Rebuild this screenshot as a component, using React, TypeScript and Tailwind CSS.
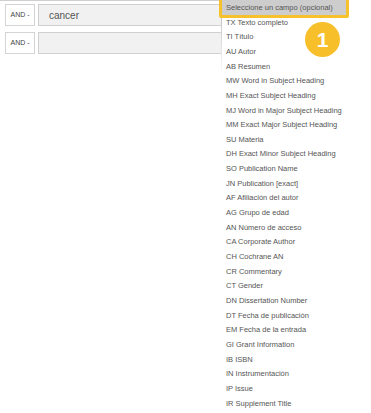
import React from "react";

const items = [
  "TX Texto completo",
  "TI Título",
  "AU Autor",
  "AB Resumen",
  "MW Word in Subject Heading",
  "MH Exact Subject Heading",
  "MJ Word in Major Subject Heading",
  "MM Exact Major Subject Heading",
  "SU Materia",
  "DH Exact Minor Subject Heading",
  "SO Publication Name",
  "JN Publication [exact]",
  "AF Afiliación del autor",
  "AG Grupo de edad",
  "AN Número de acceso",
  "CA Corporate Author",
  "CH Cochrane AN",
  "CR Commentary",
  "CT Gender",
  "DN Dissertation Number",
  "DT Fecha de publicación",
  "EM Fecha de la entrada",
  "GI Grant Information",
  "IB ISBN",
  "IN Instrumentación",
  "IP Issue",
  "IR Supplement Title",
];

function Row({ value }: { value: string }) {
  return (
    <div className="flex h-[22px] gap-[3px]">
      <div className="flex w-[30px] items-center justify-center border border-[#d4d4d4] bg-white text-[7px] text-[#444]">
        AND -
      </div>
      <div className="flex flex-1 items-center border border-[#d0d0d0] bg-[#f1f1f1] pl-[10px] text-[10px] text-[#555]">
        {value}
      </div>
    </div>
  );
}

export default function App() {
  return (
    <div
      className="relative h-[413px] w-[371px] overflow-hidden bg-white"
      style={{ fontFamily: '"Liberation Sans", Arial, sans-serif' }}
    >
      <div className="h-px bg-[#cfcfcf]" />
      <div className="flex flex-col gap-[6px] pl-[5px] pt-[3px]">
        <Row value="cancer" />
        <Row value="" />
      </div>

      {/* dropdown */}
      <div className="absolute left-[221px] top-0 h-[413px] w-[150px] bg-white">
        <div className="absolute left-0 top-[17px] h-[60px] w-px bg-gradient-to-b from-[#c4c4c4] to-transparent" />
        <div className="flex w-[125px] flex-col pl-px">
          <div className="flex h-[15px] items-center bg-[#cdcdcd] pl-[4px] text-[7.5px] leading-none text-[#555]">
            Seleccione un campo (opcional)
          </div>
          {items.map((t) => (
            <div
              key={t}
              className="flex h-[14.66px] items-center pl-[4px] text-[7.5px] leading-none text-[#555]"
            >
              {t}
            </div>
          ))}
        </div>
      </div>

      {/* highlight */}
      <div className="absolute left-[219px] top-[-3px] h-[21px] w-[130px] rounded-[2px] border-[3px] border-[#f6c12a]" />

      {/* badge */}
      <div className="absolute left-[305px] top-[22px] flex h-[35px] w-[35px] items-center justify-center rounded-full bg-[#f7c02b] text-[21px] font-bold text-white">
        1
      </div>
    </div>
  );
}
